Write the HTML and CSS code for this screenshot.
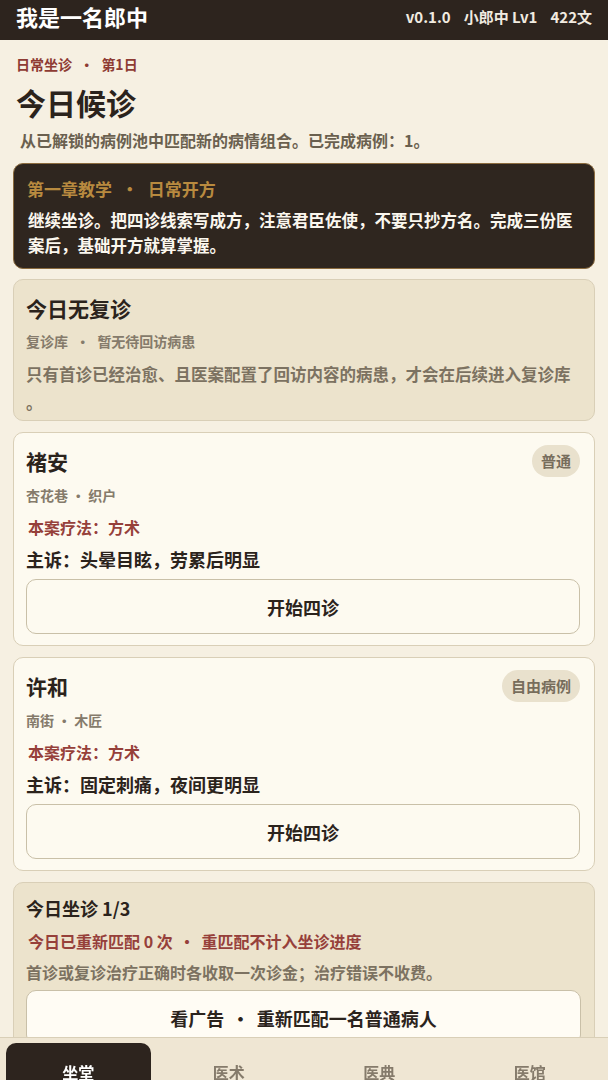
FILE: index.html
```html
<!DOCTYPE html>
<html lang="zh-CN">
<head>
    <meta charset="UTF-8">
    <meta name="viewport" content="width=device-width, initial-scale=1.0">
    <title>我是一名郎中</title>
    <link rel="stylesheet" href="styles.css">
</head>
<body>
    <header class="topbar">
        <h1 class="app-title">我是一名郎中</h1>
        <div class="status">
            <span>v0.1.0</span>
            <span>小郎中 Lv1</span>
            <span>422文</span>
        </div>
    </header>

    <main class="page">
        <p class="eyebrow">日常坐诊<span class="sep">·</span>第1日</p>
        <h2 class="page-title">今日候诊</h2>
        <p class="intro">从已解锁的病例池中匹配新的病情组合。已完成病例：1。</p>

        <section class="card card-dark">
            <h3 class="tip-title">第一章教学<span class="sep">·</span>日常开方</h3>
            <p class="tip-text">继续坐诊。把四诊线索写成方，注意君臣佐使，不要只抄方名。完成三份医案后，基础开方就算掌握。</p>
        </section>

        <section class="card card-muted">
            <h3 class="card-title">今日无复诊</h3>
            <p class="meta">复诊库<span class="sep">·</span>暂无待回访病患</p>
            <p class="note">只有首诊已经治愈、且医案配置了回访内容的病患，才会在后续进入复诊库。</p>
        </section>

        <section class="card patient">
            <div class="patient-head">
                <h3 class="card-title">褚安</h3>
                <span class="badge">普通</span>
            </div>
            <p class="meta">杏花巷 · 织户</p>
            <p class="method">本案疗法：方术</p>
            <p class="complaint">主诉：头晕目眩，劳累后明显</p>
            <button class="btn">开始四诊</button>
        </section>

        <section class="card patient">
            <div class="patient-head">
                <h3 class="card-title">许和</h3>
                <span class="badge">自由病例</span>
            </div>
            <p class="meta">南街 · 木匠</p>
            <p class="method">本案疗法：方术</p>
            <p class="complaint">主诉：固定刺痛，夜间更明显</p>
            <button class="btn">开始四诊</button>
        </section>

        <section class="card card-muted last">
            <h3 class="small-title">今日坐诊 1/3</h3>
            <p class="method">今日已重新匹配 0 次<span class="sep sep-tight">·</span>重匹配不计入坐诊进度</p>
            <p class="note">首诊或复诊治疗正确时各收取一次诊金；治疗错误不收费。</p>
            <button class="btn btn-light">看广告<span class="sep sep-tight">·</span>重新匹配一名普通病人</button>
        </section>
    </main>

    <nav class="tabbar">
        <a class="tab active">坐堂</a>
        <a class="tab">医术</a>
        <a class="tab">医典</a>
        <a class="tab">医馆</a>
    </nav>
</body>
</html>
```

FILE: styles.css
```css
body{
    margin: 0;
    background-color: #f6f0e2;
    font-family: "Noto Sans CJK SC", "Noto Sans", sans-serif;
    color: #2b231c;
}

p, h1, h2, h3{
    margin: 0;
}

.sep{
    margin: 0 0.55em;
}

.sep-tight{
    margin: 0 0.4em;
}

.topbar{
    height: 40px;
    background-color: #2d241e;
    display: flex;
    align-items: center;
    justify-content: space-between;
    padding: 0 16px 0 16px;
    color: #fff;
}

.app-title{
    font-size: 22px;
    font-weight: bold;
    line-height: 30px;
    margin-top: -8px;
}

.status{
    display: flex;
    gap: 13px;
    font-size: 15px;
    font-weight: bold;
    color: #f1ebe0;
    margin-top: -7px;
}

.page{
    padding: 14px 13px 120px;
}

.eyebrow{
    font-size: 14px;
    font-weight: bold;
    color: #8e3b33;
    padding-left: 3px;
    line-height: 20px;
}

.page-title{
    font-size: 30px;
    font-weight: bold;
    line-height: 40px;
    margin-top: 8px;
    padding-left: 3px;
}

.intro{
    font-size: 16px;
    font-weight: bold;
    color: #6a604f;
    line-height: 24px;
    margin-top: 6px;
    padding-left: 7px;
}

.card{
    border: 1px solid #d9cfb7;
    border-radius: 10px;
    padding: 13px 14px 11px 12px;
    margin-top: 11px;
    box-sizing: border-box;
}

.card-dark{
    background-color: #2f261f;
    border-color: #8b6b3e;
    padding: 12px 13px 10px 13px;
}

.tip-title{
    font-size: 17px;
    font-weight: bold;
    color: #b88a3f;
    line-height: 26px;
}

.tip-text{
    font-size: 16.5px;
    font-weight: bold;
    color: #fbf7ee;
    line-height: 25px;
    margin-top: 6px;
    padding-left: 1px;
}

.card-muted{
    background-color: #ece3cc;
    margin-top: 10px;
    padding: 14px 13px 4px 12px;
}

.patient{
    background-color: #fdfaf0;
}

.card-title{
    font-size: 21px;
    font-weight: bold;
    line-height: 28px;
}

.small-title{
    font-size: 18px;
    font-weight: bold;
    line-height: 26px;
}

.meta{
    font-size: 14px;
    font-weight: bold;
    color: #857b6b;
    line-height: 20px;
    margin-top: 9px;
}

.note{
    font-size: 16.5px;
    font-weight: bold;
    color: #7c7261;
    line-height: 28px;
    margin-top: 9px;
    line-break: anywhere;
}

.patient-head{
    display: flex;
    justify-content: space-between;
    align-items: center;
    height: 30px;
}

.badge{
    font-size: 15px;
    font-weight: bold;
    color: #776d5c;
    background-color: #e9e1cd;
    border-radius: 16px;
    padding: 0 9px;
    line-height: 32px;
}

.method{
    font-size: 16px;
    font-weight: bold;
    color: #96403a;
    line-height: 24px;
    margin-top: 10px;
    padding-left: 2px;
}

.complaint{
    font-size: 18px;
    font-weight: bold;
    line-height: 26px;
    margin-top: 7px;
}

.btn{
    display: block;
    width: 100%;
    height: 55px;
    margin-top: 7px;
    background-color: #fdfaf0;
    border: 1px solid #c9c0a8;
    border-radius: 10px;
    font-family: inherit;
    font-size: 18px;
    font-weight: bold;
    color: #2b231c;
}

.last{
    margin-top: 11px;
    padding-top: 12px;
}

.last .method{
    margin-top: 8px;
}

.last .note{
    font-size: 16px;
    line-height: 24px;
    margin-top: 7px;
}

.btn-light{
    background-color: #fffcf4;
    margin-top: 6px;
}

.tabbar{
    position: fixed;
    left: 0;
    right: 0;
    bottom: 0;
    height: 43px;
    background-color: #efe6d3;
    border-top: 1px solid #d9cfb7;
    display: grid;
    grid-template-columns: repeat(4, 1fr);
    padding: 5px 6px 0;
    box-sizing: border-box;
    gap: 6px;
}

.tab{
    font-size: 16px;
    font-weight: bold;
    color: #857b6b;
    text-align: center;
    padding-top: 18px;
    line-height: 22px;
    border-radius: 10px 10px 0 0;
}

.tab.active{
    background-color: #2d241e;
    color: #fff;
}
```
